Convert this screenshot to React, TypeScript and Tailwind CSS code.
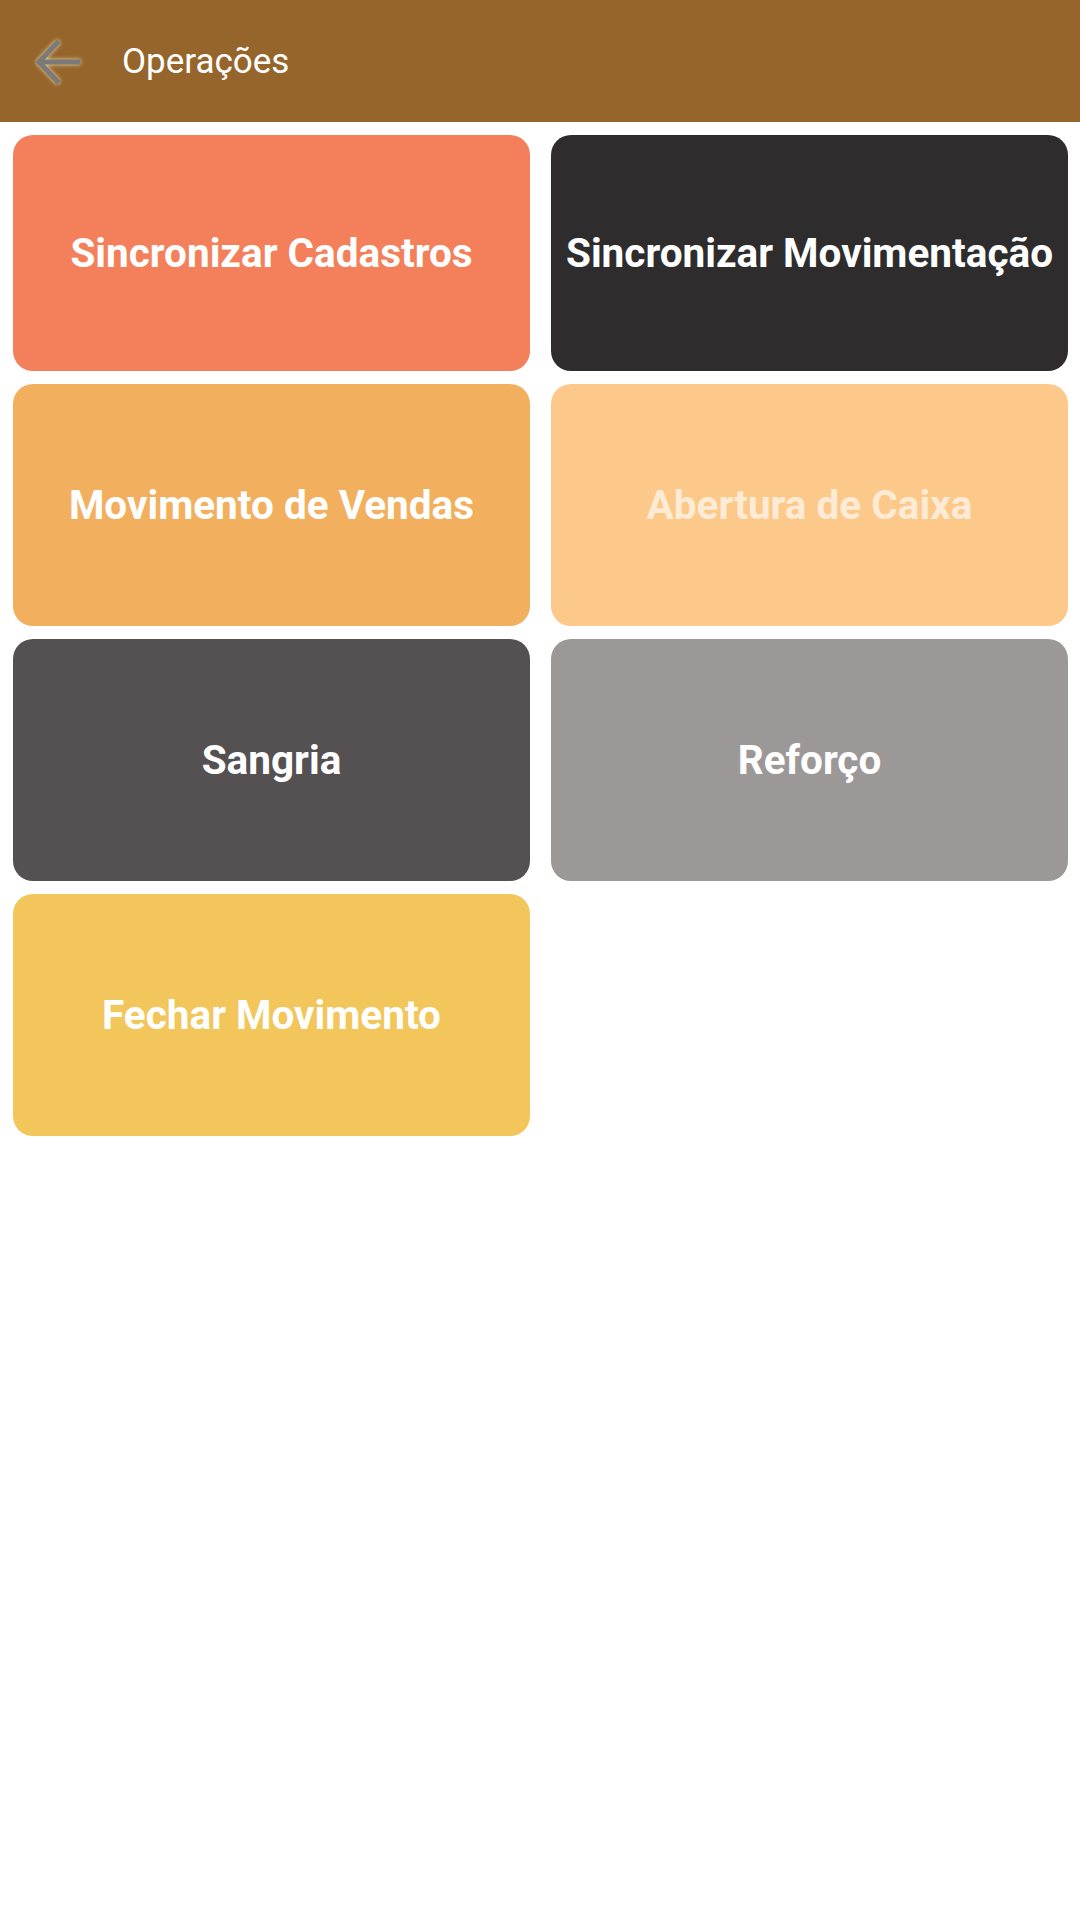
const tiles = [
  { label: "Sincronizar Cadastros", bg: "bg-[#f3805a]", text: "text-white" },
  { label: "Sincronizar Movimentação", bg: "bg-[#2e2c2d]", text: "text-white" },
  { label: "Movimento de Vendas", bg: "bg-[#f2b05e]", text: "text-white" },
  { label: "Abertura de Caixa", bg: "bg-[#fcc98a]", text: "text-[#fdebd6]" },
  { label: "Sangria", bg: "bg-[#555052]", text: "text-white" },
  { label: "Reforço", bg: "bg-[#9c9897]", text: "text-white" },
  { label: "Fechar Movimento", bg: "bg-[#f2c65a]", text: "text-white" },
];

const BackArrow = () => (
  <svg
    width="46"
    height="44"
    viewBox="0 0 46 44"
    fill="none"
    className="drop-shadow-[0_0_2px_rgba(255,236,190,0.9)]"
  >
    <path
      d="M43 22H5M22 3L4 22l18 19"
      stroke="#7a7a7a"
      strokeWidth="5"
      strokeLinecap="square"
    />
  </svg>
);

export default function App() {
  return (
    <div className="min-h-[1920px] w-[1080px] bg-white font-['Roboto',sans-serif]">
      <header className="h-[122px] bg-[#95652b] flex items-center">
        <div className="ml-[35px] mt-[2px] flex items-center">
          <BackArrow />
        </div>
        <h1 className="ml-[41px] text-[35px] text-white font-normal leading-none">
          Operações
        </h1>
      </header>
      <main className="grid grid-cols-2 gap-x-[21px] gap-y-[13px] pl-[13px] pr-[12px] pt-[13px]">
        {tiles.map((t, i) => (
          <button
            key={t.label}
            className={`${t.bg} ${i < 2 ? "h-[236px]" : "h-[242px]"} rounded-[20px] flex items-center justify-center`}
          >
            <span className={`${t.text} text-[40.5px] font-bold whitespace-nowrap`}>
              {t.label}
            </span>
          </button>
        ))}
      </main>
    </div>
  );
}
